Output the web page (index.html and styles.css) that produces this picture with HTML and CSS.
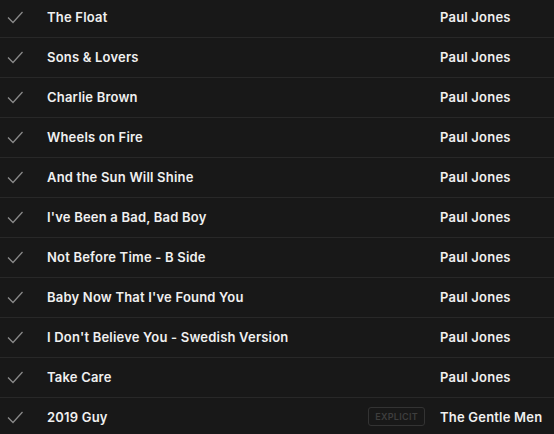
FILE: index.html
```html
<!DOCTYPE html>
<html lang="en">
<head>
    <meta charset="UTF-8">
    <title>Tracks</title>
    <link rel="stylesheet" href="styles.css">
</head>
<body>
    <div class="tracklist">
        <div class="track">
            <span class="check"><svg width="16" height="14" viewBox="0 0 16 14"><path d="M1 7.5 L6 12.5 L15.5 2" fill="none" stroke="currentColor" stroke-width="1.3"/></svg></span>
            <span class="name">The Float</span>
            <span class="artist">Paul Jones</span>
        </div>
        <div class="track">
            <span class="check"><svg width="16" height="14" viewBox="0 0 16 14"><path d="M1 7.5 L6 12.5 L15.5 2" fill="none" stroke="currentColor" stroke-width="1.3"/></svg></span>
            <span class="name">Sons &amp; Lovers</span>
            <span class="artist">Paul Jones</span>
        </div>
        <div class="track">
            <span class="check"><svg width="16" height="14" viewBox="0 0 16 14"><path d="M1 7.5 L6 12.5 L15.5 2" fill="none" stroke="currentColor" stroke-width="1.3"/></svg></span>
            <span class="name">Charlie Brown</span>
            <span class="artist">Paul Jones</span>
        </div>
        <div class="track">
            <span class="check"><svg width="16" height="14" viewBox="0 0 16 14"><path d="M1 7.5 L6 12.5 L15.5 2" fill="none" stroke="currentColor" stroke-width="1.3"/></svg></span>
            <span class="name">Wheels on Fire</span>
            <span class="artist">Paul Jones</span>
        </div>
        <div class="track">
            <span class="check"><svg width="16" height="14" viewBox="0 0 16 14"><path d="M1 7.5 L6 12.5 L15.5 2" fill="none" stroke="currentColor" stroke-width="1.3"/></svg></span>
            <span class="name">And the Sun Will Shine</span>
            <span class="artist">Paul Jones</span>
        </div>
        <div class="track">
            <span class="check"><svg width="16" height="14" viewBox="0 0 16 14"><path d="M1 7.5 L6 12.5 L15.5 2" fill="none" stroke="currentColor" stroke-width="1.3"/></svg></span>
            <span class="name">I've Been a Bad, Bad Boy</span>
            <span class="artist">Paul Jones</span>
        </div>
        <div class="track">
            <span class="check"><svg width="16" height="14" viewBox="0 0 16 14"><path d="M1 7.5 L6 12.5 L15.5 2" fill="none" stroke="currentColor" stroke-width="1.3"/></svg></span>
            <span class="name">Not Before Time - B Side</span>
            <span class="artist">Paul Jones</span>
        </div>
        <div class="track">
            <span class="check"><svg width="16" height="14" viewBox="0 0 16 14"><path d="M1 7.5 L6 12.5 L15.5 2" fill="none" stroke="currentColor" stroke-width="1.3"/></svg></span>
            <span class="name">Baby Now That I've Found You</span>
            <span class="artist">Paul Jones</span>
        </div>
        <div class="track">
            <span class="check"><svg width="16" height="14" viewBox="0 0 16 14"><path d="M1 7.5 L6 12.5 L15.5 2" fill="none" stroke="currentColor" stroke-width="1.3"/></svg></span>
            <span class="name">I Don't Believe You - Swedish Version</span>
            <span class="artist">Paul Jones</span>
        </div>
        <div class="track">
            <span class="check"><svg width="16" height="14" viewBox="0 0 16 14"><path d="M1 7.5 L6 12.5 L15.5 2" fill="none" stroke="currentColor" stroke-width="1.3"/></svg></span>
            <span class="name">Take Care</span>
            <span class="artist">Paul Jones</span>
        </div>
        <div class="track">
            <span class="check"><svg width="16" height="14" viewBox="0 0 16 14"><path d="M1 7.5 L6 12.5 L15.5 2" fill="none" stroke="currentColor" stroke-width="1.3"/></svg></span>
            <span class="name">2019 Guy</span>
            <span class="explicit">EXPLICIT</span>
            <span class="artist">The Gentle Men</span>
        </div>
    </div>
</body>
</html>
```

FILE: styles.css
```css
/* Track list */
body {
    margin: 0;
    background-color: #181818;
    font-family: Inter, "Noto Sans", sans-serif;
    color: #f0f0f0;
    overflow: hidden;
}

.tracklist {
    margin-top: -2px;
}

.track {
    display: flex;
    align-items: center;
    box-sizing: border-box;
    height: 40px;
    padding-bottom: 2px;
    border-bottom: 1px solid #282828;
    font-size: 13px;
    font-weight: 600;
    letter-spacing: 0.2px;
}

.check {
    width: 47px;
    padding-left: 7px;
    box-sizing: border-box;
    color: #8a8a8a;
    display: flex;
    align-items: center;
}

.name {
    flex: 1;
}

.explicit {
    border: 1px solid #333;
    border-radius: 3px;
    color: #3e3e3e;
    font-size: 9px;
    font-weight: 600;
    letter-spacing: 0.3px;
    padding: 3px 6px;
    margin-right: 15px;
}

.artist {
    width: 114px;
}
```
